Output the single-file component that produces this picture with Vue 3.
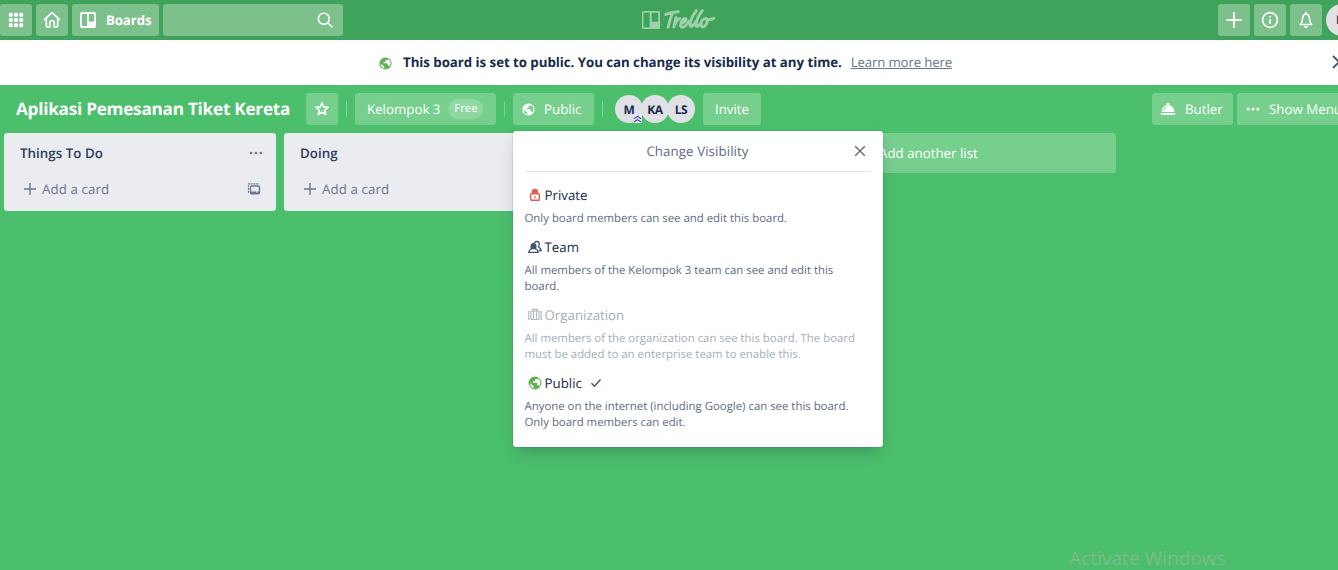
<script setup>
const lists = [
  { name: 'Things To Do', menu: true },
  { name: 'Doing', menu: false },
]
const members = ['M', 'KA', 'LS']
const options = [
  { id: 'private', name: 'Private', lines: ['Only board members can see and edit this board.'] },
  { id: 'team', name: 'Team', lines: ['All members of the Kelompok 3 team can see and edit this', 'board.'] },
  { id: 'org', name: 'Organization', lines: ['All members of the organization can see this board. The board', 'must be added to an enterprise team to enable this.'] },
  { id: 'public', name: 'Public', lines: ['Anyone on the internet (including Google) can see this board.', 'Only board members can edit.'] },
]
const globePath = 'M8 1.5a6.5 6.5 0 1 0 0 13a6.5 6.5 0 0 0 0-13zM3 8.2l3.6 3v2A5.3 5.3 0 0 1 3 8.2zM12.2 11.2c-.2-.6-.7-1-1.3-1h-.6V8.400c0-.4-.3-.7-.7-.7H6V6.300h1.400c.4 0 .7-.3.7-.7V4.300h1.300c.7 0 1.200-.5 1.300-1.100A5.300 5.300 0 0 1 12.200 11.200z'
</script>

<template>
  <div class="page">
    <header class="top">
      <div class="group">
        <div class="tbtn sq">
          <svg width="16" height="16" viewBox="0 0 16 16" fill="#fff">
            <template v-for="r in 3" :key="r">
              <rect v-for="c in 3" :key="c" :x="c * 5.2 - 4.4" :y="r * 5.2 - 4.4" width="4" height="4" rx="1.2" />
            </template>
          </svg>
        </div>
        <div class="tbtn sq">
          <svg width="18" height="18" viewBox="0 0 18 18" fill="none" stroke="#fff" stroke-width="1.7" stroke-linejoin="round" stroke-linecap="round">
            <path d="M1.600 8.700L8 2.300q1-.9 2 0l6.400 6.400M3.300 7.500v7.200q0 1.300 1.300 1.300h2.200v-4.300a2.200 2.200 0 0 1 4.400 0V16h2.200q1.300 0 1.300-1.300V7.500" />
          </svg>
        </div>
        <div class="tbtn boards">
          <svg width="16" height="16" viewBox="0 0 16 16">
            <path fill="#fff" fill-rule="evenodd" d="M2 0h12a2 2 0 0 1 2 2v12a2 2 0 0 1-2 2H2a2 2 0 0 1-2-2V2a2 2 0 0 1 2-2zM1.800 2v12h5.400V2zM8.800 2v7.500h5.400V2z" />
          </svg>
          <span>Boards</span>
        </div>
        <div class="tbtn search">
          <svg width="18" height="18" viewBox="0 0 18 18" fill="none" stroke="#fff" stroke-width="1.600" stroke-linecap="round">
            <circle cx="7.800" cy="7.700" r="5.500" /><path d="M12 12l4 4" />
          </svg>
        </div>
      </div>
      <div class="logo">
        <svg width="18" height="18" viewBox="0 0 18 18">
          <path fill="#9ed0aa" fill-rule="evenodd" d="M1.500 0h15A1.500 1.500 0 0 1 18 1.500v15a1.500 1.500 0 0 1-1.500 1.500h-15A1.500 1.500 0 0 1 0 16.500v-15A1.500 1.500 0 0 1 1.500 0zM1.500 1.800v14.400h6.200V1.800zM9.700 1.800v9h6.500v-9z" />
        </svg>
        <svg width="53" height="24" viewBox="0 0 54 24" fill="none" stroke="#9ed0aa" stroke-width="3" stroke-linecap="round" stroke-linejoin="round">
          <path d="M2.800 6.300Q9 3.800 15.500 3.500M10 4.500Q7 11 5.200 19.300M13.200 9.500L11 19.300Q13 12.500 17 10.400M18.600 15.300Q24 13.500 23.500 11Q21 9 18.800 14Q16.500 20 20.500 19.300Q23.500 18 27 13M34 2.500Q26.800 12 27.700 18Q29 20.500 33.500 13.500M40 2.500Q33 12 33.800 18Q35 20 38.300 15.500M43.500 10.300Q39 11 38.700 16Q38.800 20 42 18.700Q46.500 15 44.500 10.600Q47 12.500 51.800 10.300" />
        </svg>
      </div>
      <div class="group right">
        <div class="tbtn sq"><svg width="16" height="16" viewBox="0 0 16 16" stroke="#fff" stroke-width="1.800" stroke-linecap="round"><path d="M8 1v14M1 8h14" /></svg></div>
        <div class="tbtn sq">
          <svg width="18" height="18" viewBox="0 0 18 18" fill="none" stroke="#fff" stroke-width="1.700"><circle cx="9" cy="9" r="7.400" /><path d="M9 8v5M9 5v1.600" /></svg>
        </div>
        <div class="tbtn sq">
          <svg width="18" height="18" viewBox="0 0 18 18" fill="none" stroke="#fff" stroke-width="1.600" stroke-linejoin="round" stroke-linecap="round">
            <path d="M9 1.500V3M3.300 13.500h11.400q-2.200-2.200-2.200-5.500Q12.200 3.200 9 3Q5.800 3.200 5.500 8q0 3.300-2.200 5.500z" /><path d="M7.600 15.700q1.400 1.200 2.800 0" />
          </svg>
        </div>
        <div class="me">M</div>
      </div>
    </header>

    <div class="banner">
      <svg class="bglobe" width="15" height="15" viewBox="0 0 16 16"><path fill="#61b054" fill-rule="evenodd" :d="globePath" /></svg>
      <b>This board is set to public. You can change its visibility at any time.</b>
      <span class="learn">Learn more here</span>
      <svg class="bclose" width="14" height="14" viewBox="0 0 14 14" stroke="#42526e" stroke-width="1.800"><path d="M1 1l12 12M13 1L1 13" /></svg>
    </div>

    <div class="bar">
      <h1>Aplikasi Pemesanan Tiket Kereta</h1>
      <div class="btn star">
        <svg width="16" height="16" viewBox="0 0 16 16" fill="none" stroke="#fff" stroke-width="1.700" stroke-linejoin="round"><path d="M8 2l1.700 3.900 4.300.4-3.200 2.900.9 4.200L8 11.200l-3.700 2.200.9-4.200L2 6.300l4.300-.4z" /></svg>
      </div>
      <i class="sep"></i>
      <div class="btn team"><span>Kelompok 3</span><em>Free</em></div>
      <i class="sep s2"></i>
      <div class="btn vis">
        <svg width="15" height="15" viewBox="0 0 16 16"><path fill="#fff" fill-rule="evenodd" :d="globePath" /></svg>
        <span>Public</span>
      </div>
      <i class="sep s3"></i>
      <div class="members">
        <div v-for="m in members" :key="m" class="avatar">
          {{ m }}
          <svg v-if="m === 'M'" class="admin" width="9" height="9" viewBox="0 0 9 9" fill="none" stroke="#4b4fa3" stroke-width="1.100"><rect width="9" height="9" fill="#e6e8f3" stroke="none" /><path d="M.8 4.800l3.700-2.300 3.700 2.300M.8 8l3.700-2.300L8.200 8" /></svg>
        </div>
      </div>
      <div class="btn invite">Invite</div>
      <div class="barright">
        <div class="btn butler">
          <svg width="16" height="16" viewBox="0 0 16 16" fill="#fff"><rect x="6.500" y="2" width="3" height="2" rx=".8" /><path d="M1.500 11a6.500 7 0 0 1 13 0z" /><rect x=".7" y="11.900" width="14.600" height="2.100" rx=".8" /><path d="M3.700 9.500Q4.300 6.500 7 5.700" stroke="#75ce8d" fill="none" stroke-width=".9" /></svg>
          <span>Butler</span>
        </div>
        <div class="btn menu">
          <svg width="14" height="4" viewBox="0 0 14 4" fill="#fff"><circle cx="2.200" cy="2" r="1.500" /><circle cx="7" cy="2" r="1.500" /><circle cx="11.800" cy="2" r="1.500" /></svg>
          <span>Show Menu</span>
        </div>
      </div>
    </div>

    <main class="lists">
      <section v-for="l in lists" :key="l.name" class="list">
        <div class="lhead">
          <span>{{ l.name }}</span>
          <svg v-if="l.menu" width="14" height="4" viewBox="0 0 14 4" fill="#6b778c"><circle cx="2.200" cy="2" r="1.350" /><circle cx="7" cy="2" r="1.350" /><circle cx="11.800" cy="2" r="1.350" /></svg>
        </div>
        <div class="ladd">
          <svg width="14" height="14" viewBox="0 0 14 14" stroke="#6b778c" stroke-width="1.400"><path d="M7 1v12M1 7h12" /></svg>
          <span>Add a card</span>
          <svg v-if="l.menu" class="tpl" width="14" height="14" viewBox="0 0 14 14" fill="none" stroke="#6b778c" stroke-width="1.400">
            <rect x="3.500" y="4" width="9" height="7.800" rx="1.200" /><path d="M1.500 10.800V1.800H11.500" stroke-width="1.200" stroke-dasharray="2 .8" /><path d="M4 10.300h5.500M10.300 10.300h2" stroke-width="1.600" />
          </svg>
        </div>
      </section>
      <section class="addlist"><span>Add another list</span></section>
    </main>

    <div class="pop">
      <div class="phead">
        <span>Change Visibility</span>
        <svg width="12" height="12" viewBox="0 0 12 12" stroke="#5e6c84" stroke-width="1.400"><path d="M1.200 1.200l9.600 9.600M10.800 1.200L1.200 10.800" /></svg>
      </div>
      <div v-for="o in options" :key="o.id" class="opt" :class="{ disabled: o.id === 'org' }">
        <div class="oname">
          <svg v-if="o.id === 'private'" width="14" height="14" viewBox="0 0 14 14" fill="none" stroke="#e2604f" stroke-width="1.400"><rect x="2.700" y="5.700" width="8.600" height="6.600" rx=".8" /><path d="M4.500 5V4a2.500 2.500 0 0 1 5 0v1z" fill="#d95f52" /><rect x="6.200" y="8.200" width="1.600" height="1.600" fill="#e2604f" stroke="none" /></svg>
          <svg v-else-if="o.id === 'team'" width="14" height="14" viewBox="0 0 14 14" fill="none" stroke="#42526e" stroke-width="1.300"><path d="M6.300 3.300Q7 1.300 8.800 1.300Q11.400 1.500 11.200 4.500Q11 6.300 10.400 7Q12.700 8 13.200 10.500H11" /><path d="M.8 12.300Q1 9.500 4 8.500Q2.800 7 3.200 5Q3.800 3.700 5.500 3.700T7.800 5Q8.200 7 7 8.500Q10 9.500 10.200 12.300z" /><path d="M3.500 8.500Q3 4 5.500 4T7.500 8.500z" fill="#42526e" /></svg>
          <svg v-else-if="o.id === 'org'" width="14" height="14" viewBox="0 0 14 14" fill="none" stroke="#b3bac5" stroke-width="1.200"><path d="M1.800 3.500H.8v7.700h1M12.200 3.500h1v7.700h-1M4.700 3V1.300h4.600V3" /><rect x="3" y="3" width="8" height="8.500" rx=".8" /><path d="M5.500 3v8M8.500 3v8" /></svg>
          <svg v-else width="14" height="14" viewBox="1 1 14 14"><path fill="#61b054" fill-rule="evenodd" :d="globePath" /></svg>
          <span>{{ o.name }}</span>
          <svg v-if="o.id === 'public'" class="check" width="12" height="10" viewBox="0 0 12 10" fill="none" stroke="#42526e" stroke-width="1.400"><path d="M1.500 5.200l3 3L10.500 1.500" /></svg>
        </div>
        <p v-for="t in o.lines" :key="t">{{ t }}</p>
      </div>
    </div>

    <div class="watermark">Activate Windows</div>
  </div>
</template>

<style>
body { overflow: hidden; }
</style>

<style scoped>
.page { position: relative; width: 1338px; height: 570px; overflow: hidden; background: #4bbf6b; font-family: "Open Sans", "Noto Sans", sans-serif; font-size: 13.300px; color: #172b4d; text-rendering: geometricPrecision; white-space: nowrap; box-sizing: border-box; }
.page * { box-sizing: border-box; }
svg { display: block; flex: none; }
.top { height: 40px; background: #40a35b; display: flex; justify-content: space-between; align-items: center; position: relative; }
.group { display: flex; gap: 4px; align-items: center; }
.tbtn { flex: none; height: 32px; border-radius: 3px; background: #7cc08c; display: flex; align-items: center; color: #fff; font-weight: 700; }
.sq { width: 32px; justify-content: center; }
.boards { width: 87px; padding-left: 8px; gap: 10px; letter-spacing: -.15px; }
.search { width: 180px; justify-content: flex-end; padding-right: 9px; }
.logo { position: absolute; left: 642px; top: 8px; display: flex; gap: 3px; align-items: center; }
.right { width: 120px; }
.me { flex: none; width: 32px; height: 32px; border-radius: 50%; background: #dfe1e6; font-weight: 700; font-size: 12px; padding-left: 10px; line-height: 32px; }
.banner { height: 45px; background: #fff; display: flex; align-items: center; padding: 0 0 1px 377px; position: relative; }
.bglobe { position: relative; top: 1px; left: 1px; }
.banner b { margin-left: 11px; letter-spacing: -.05px; }
.learn { margin-left: 9px; color: #6b778c; text-decoration: underline; letter-spacing: -.18px; }
.bclose { position: absolute; left: 1332px; top: 15px; }
.bar { height: 48px; display: flex; align-items: center; padding-left: 16px; color: #fff; }
h1 { margin: 0; flex: none; width: 290px; font-size: 17.200px; font-weight: 700; letter-spacing: -.26px; padding-top: 1px; }
.btn { height: 32px; border-radius: 3px; background: #77cf8e; display: flex; align-items: center; flex: none; }
.star { width: 32px; justify-content: center; }
.sep { width: 1px; height: 16px; background: #7fd294; margin: 0 8px; flex: none; }
.team { width: 141px; padding-left: 12px; gap: 8px; }
em { font-style: normal; width: 35px; height: 20px; border-radius: 10px; background: #8fd8a2; font-size: 11.400px; line-height: 20px; text-align: center; }
.vis { width: 81px; padding-left: 8px; gap: 8px; }
.s3 { margin: 0 12px 0 8px; }
.members { display: flex; width: 80px; flex: none; }
.avatar { position: relative; flex: none; width: 28px; height: 28px; margin-right: -2px; border-radius: 50%; background: #dfe1e6; color: #172b4d; font-weight: 700; font-size: 12px; line-height: 29px; text-align: center; letter-spacing: -.4px; }
.admin { position: absolute; right: 1px; bottom: 0; }
.invite { margin-left: 8px; width: 58px; justify-content: center; }
.barright { margin-left: 391px; display: flex; gap: 4px; flex: none; }
.butler { width: 81px; padding-left: 8px; gap: 9px; }
.menu { width: 120px; padding-left: 9px; gap: 9px; }
.lists { display: flex; gap: 8px; padding-left: 4px; align-items: flex-start; }
.list { flex: none; width: 272px; height: 78px; border-radius: 3px; background: #ebecf0; }
.lhead { height: 40px; padding: 0 13px 0 16px; display: flex; align-items: center; justify-content: space-between; font-weight: 600; color: #2c3d5c; letter-spacing: .05px; }
.ladd { height: 32px; padding: 0 15px 0 19px; display: flex; align-items: center; gap: 5px; color: #6b778c; letter-spacing: .1px; }
.tpl { margin-left: auto; }
.addlist { margin-left: 280px; width: 272px; height: 40px; border-radius: 3px; background: #77cf8e; color: #fff; display: flex; align-items: center; padding-left: 35px; }
.pop { position: absolute; left: 513px; top: 131px; width: 370px; height: 316px; background: #fff; border-radius: 3px; box-shadow: 0 8px 16px -4px rgba(9, 30, 66, .25), 0 0 0 1px rgba(9, 30, 66, .08); padding: 0 12px; }
.phead { height: 41px; border-bottom: 1px solid #dfe1e6; display: flex; align-items: center; justify-content: center; color: #5e6c84; position: relative; margin-bottom: 11px; padding-right: 1px; letter-spacing: .08px; }
.phead svg { position: absolute; right: 5px; top: 14px; }
.opt { padding-bottom: 10px; }
.oname { height: 26px; display: flex; align-items: center; gap: 3px; padding: 0 0 2px 2.500px; }
.check { margin-left: 5px; }
.opt p { margin: 0 0 0 -.5px; font-size: 11.400px; line-height: 16px; color: #5e6c84; position: relative; top: 2px; }
.disabled .oname, .disabled p { color: #a5adba; }
.watermark { position: absolute; left: 1069px; top: 547px; font-size: 19px; line-height: 23px; height: 23px; color: #7fb98c; letter-spacing: .05px; }
</style>
